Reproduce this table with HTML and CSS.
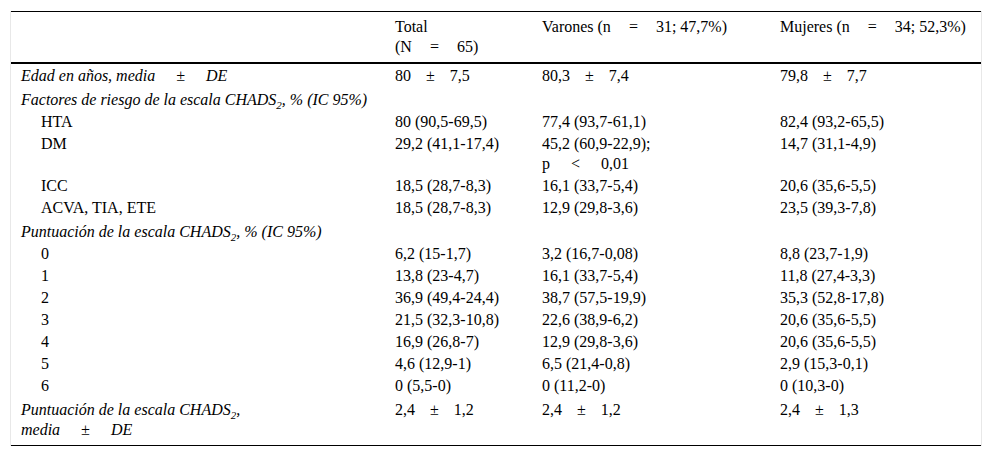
FILE: index.html
```html
<!DOCTYPE html>
<html lang="es">
<head>
<meta charset="utf-8">
<link rel="stylesheet" href="styles.css">
</head>
<body>
<div class="wrap">
<table class="tbl">
  <colgroup>
    <col class="c1"><col class="c2"><col class="c3"><col class="c4">
  </colgroup>
  <thead>
    <tr>
      <th></th>
      <th>Total<br>(N<span class="eq">=</span>65)</th>
      <th>Varones (n<span class="eq">=</span>31; 47,7%)</th>
      <th>Mujeres (n<span class="eq">=</span>34; 52,3%)</th>
    </tr>
  </thead>
  <tbody>
    <tr><td class="it">Edad en años, media<span class="pmi">±</span>DE</td><td>80<span class="pm">±</span>7,5</td><td>80,3<span class="pm">±</span>7,4</td><td>79,8<span class="pm">±</span>7,7</td></tr>
    <tr class="subrow"><td class="it">Factores de riesgo de la escala CHADS<sub>2</sub>, % (IC 95%)</td><td></td><td></td><td></td></tr>
    <tr><td class="ind">HTA</td><td>80 (90,5-69,5)</td><td>77,4 (93,7-61,1)</td><td>82,4 (93,2-65,5)</td></tr>
    <tr><td class="ind">DM</td><td>29,2 (41,1-17,4)</td><td>45,2 (60,9-22,9);<br>p<span class="lt">&lt;</span>0,01</td><td>14,7 (31,1-4,9)</td></tr>
    <tr><td class="ind">ICC</td><td>18,5 (28,7-8,3)</td><td>16,1 (33,7-5,4)</td><td>20,6 (35,6-5,5)</td></tr>
    <tr><td class="ind">ACVA, TIA, ETE</td><td>18,5 (28,7-8,3)</td><td>12,9 (29,8-3,6)</td><td>23,5 (39,3-7,8)</td></tr>
    <tr class="subrow"><td class="it">Puntuación de la escala CHADS<sub>2</sub>, % (IC 95%)</td><td></td><td></td><td></td></tr>
    <tr><td class="ind">0</td><td>6,2 (15-1,7)</td><td>3,2 (16,7-0,08)</td><td>8,8 (23,7-1,9)</td></tr>
    <tr><td class="ind">1</td><td>13,8 (23-4,7)</td><td>16,1 (33,7-5,4)</td><td>11,8 (27,4-3,3)</td></tr>
    <tr><td class="ind">2</td><td>36,9 (49,4-24,4)</td><td>38,7 (57,5-19,9)</td><td>35,3 (52,8-17,8)</td></tr>
    <tr><td class="ind">3</td><td>21,5 (32,3-10,8)</td><td>22,6 (38,9-6,2)</td><td>20,6 (35,6-5,5)</td></tr>
    <tr><td class="ind">4</td><td>16,9 (26,8-7)</td><td>12,9 (29,8-3,6)</td><td>20,6 (35,6-5,5)</td></tr>
    <tr><td class="ind">5</td><td>4,6 (12,9-1)</td><td>6,5 (21,4-0,8)</td><td>2,9 (15,3-0,1)</td></tr>
    <tr><td class="ind">6</td><td>0 (5,5-0)</td><td>0 (11,2-0)</td><td>0 (10,3-0)</td></tr>
    <tr class="subrow last"><td class="it">Puntuación de la escala CHADS<sub>2</sub>,<br>media<span class="pmi">±</span>DE</td><td>2,4<span class="pm">±</span>1,2</td><td>2,4<span class="pm">±</span>1,2</td><td>2,4<span class="pm">±</span>1,3</td></tr>
  </tbody>
</table>
</div>
</body>
</html>
```

FILE: styles.css
```css
html, body {
  margin: 0;
  padding: 0;
  background: #fff;
}
body {
  padding: 11px 11px 0 10px;
  font-family: "Liberation Serif", "Times New Roman", serif;
  font-size: 16px;
  color: #000;
}
.wrap {
  width: 970px;
  border-left: 1px solid #e8e8e8;
  border-right: 1px solid #e8e8e8;
}
.tbl {
  width: 970px;
  border-collapse: collapse;
  table-layout: fixed;
}
.c1 { width: 374px; }
.c2 { width: 147px; }
.c3 { width: 238px; }
.c4 { width: 211px; }
.tbl th {
  font-weight: normal;
  text-align: left;
  vertical-align: top;
  line-height: 20px;
  padding: 5px 10px 5px;
  border-top: 1px solid #000;
  border-bottom: 2px solid #000;
}
.tbl td {
  vertical-align: top;
  line-height: 20px;
  padding: 1px 10px;
  text-align: left;
}
.tbl tbody tr:first-child td { padding-top: 2px; }
.tbl tr.subrow td { padding-top: 3px; }
.tbl tr.last td {
  border-bottom: 1px solid #000;
  padding-bottom: 5px;
}
.it { font-style: italic; }
.tbl td.ind { padding-left: 30px; }
.eq { margin: 0 18px; }
.pm { margin: 0 15px; }
.pmi { margin: 0 21px; }
.lt { margin: 0 21px; }
sub {
  font-size: 11px;
  line-height: 0;
  vertical-align: -4px;
}
```
